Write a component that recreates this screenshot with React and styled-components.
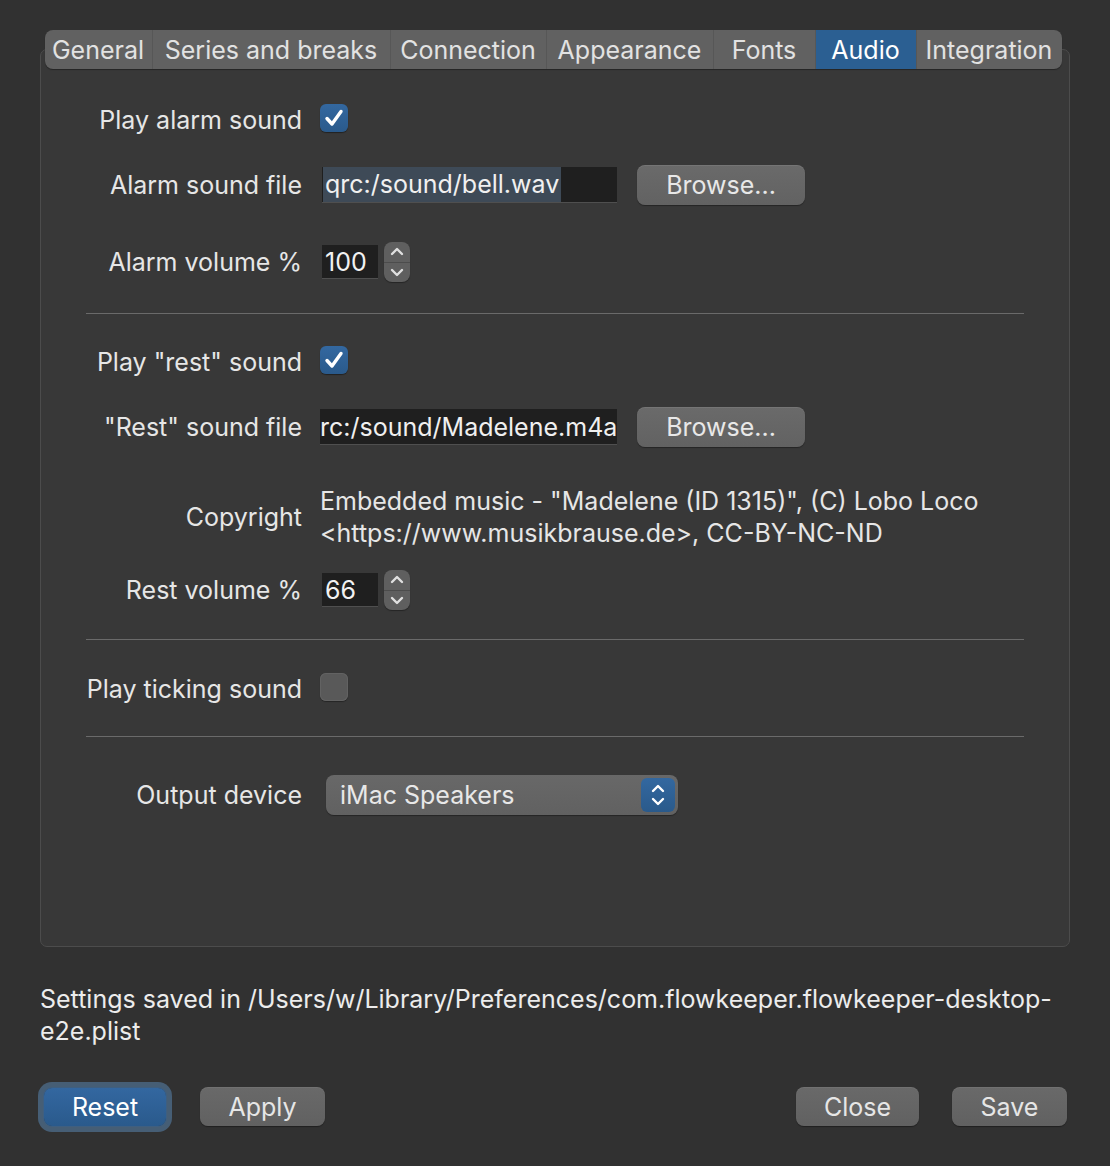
import React from "react";
import styled, { createGlobalStyle } from "styled-components";

const Global = createGlobalStyle`
  html, body { margin: 0; padding: 0; background: #313131; }
  body { font-family: Inter, "Noto Sans", "Liberation Sans", sans-serif; color: #e3e3e3; }
  * { box-sizing: border-box; }
`;

const Page = styled.div`
  width: 1110px;
  height: 1166px;
  padding: 30px 40px 0 40px;
  background: #313131;
  display: flex;
  flex-direction: column;
  font-size: 25px;
`;

const TabWidget = styled.div`
  display: flex;
  flex-direction: column;
`;

const TabBar = styled.div`
  align-self: center;
  position: relative;
  z-index: 1;
  display: flex;
  height: 39px;
  margin-bottom: -20px;
  margin-left: -4px;
  border-radius: 8px;
  background: #616161;
  overflow: hidden;
  box-shadow: 0 1px 1px rgba(0, 0, 0, 0.35);
`;

const Tab = styled.div`
  display: flex;
  align-items: center;
  justify-content: center;
  width: ${(p) => p.$w}px;
  height: 100%;
  font-size: 25px;
  color: ${(p) => (p.$active ? "#ffffff" : "#e2e2e2")};
  background: ${(p) => (p.$active ? "#2b5f92" : "transparent")};
  border-left: ${(p) => (p.$first ? "none" : "1px solid #575757")};
  white-space: nowrap;
`;

const Pane = styled.div`
  height: 898px;
  border: 1px solid #4c4c4c;
  border-radius: 7px;
  background: #383838;
  padding: 50px 45px 0 45px;
  display: flex;
  flex-direction: column;
`;

const Row = styled.div`
  display: grid;
  grid-template-columns: 216px 1fr;
  column-gap: 18px;
  align-items: center;
  min-height: 40px;
  margin-top: ${(p) => p.$mt || 0}px;
`;

const Label = styled.div`
  text-align: right;
  white-space: nowrap;
  color: #e6e6e6;
`;

const Field = styled.div`
  display: flex;
  align-items: center;
  gap: 20px;
  margin-left: ${(p) => p.$ml || 0}px;
`;

const Separator = styled.div`
  height: 1px;
  background: #6a6a6a;
  margin-top: ${(p) => p.$mt || 0}px;
`;

const CheckBox = styled.div`
  width: 28px;
  height: 28px;
  border-radius: 6px;
  display: flex;
  align-items: center;
  justify-content: center;
  margin-top: -4px;
  background: ${(p) => (p.$checked ? "linear-gradient(#3368a0, #2a5a8b)" : "#595959")};
  box-shadow: ${(p) =>
    p.$checked ? "0 1px 1px rgba(0,0,0,0.4)" : "inset 0 0 0 1px #626262, 0 1px 1px rgba(0,0,0,0.35)"};
`;

const TextInput = styled.div`
  width: ${(p) => p.$w}px;
  height: 36px;
  background: #1f1f1f;
  border-bottom: 1px solid #4f4f4f;
  display: flex;
  align-items: center;
  overflow: hidden;
  white-space: nowrap;
  font-size: 25px;
  color: #f0f0f0;
  padding-left: ${(p) => p.$pl || 0}px;
`;

const Selection = styled.span`
  background: #3e4a57;
  padding: 2px 2px 3px 2px;
  margin-left: 1px;
`;

const PushButton = styled.div`
  height: 40px;
  width: ${(p) => (p.$w ? `${p.$w}px` : "auto")};
  padding: 0 28px;
  border-radius: 8px;
  display: flex;
  align-items: center;
  justify-content: center;
  font-size: 25px;
  color: #e8e8e8;
  background: linear-gradient(#6a6a6a, #626262);
  box-shadow: 0 1px 1px rgba(0, 0, 0, 0.35), inset 0 1px 0 rgba(255, 255, 255, 0.08);
  white-space: nowrap;
`;

const SpinBox = styled.div`
  display: flex;
  align-items: center;
  gap: 6px;
`;

const SpinInput = styled.div`
  width: 56px;
  height: 34px;
  background: #1f1f1f;
  border-bottom: 1px solid #4f4f4f;
  display: flex;
  align-items: center;
  padding-left: 3px;
  font-size: 25px;
  color: #f2f2f2;
`;

const Stepper = styled.div`
  width: 26px;
  height: 40px;
  border-radius: 8px;
  background: #5f5f5f;
  display: flex;
  flex-direction: column;
  box-shadow: 0 1px 1px rgba(0, 0, 0, 0.35);
`;

const StepHalf = styled.div`
  flex: 1;
  display: flex;
  align-items: center;
  justify-content: center;
  border-top: ${(p) => (p.$bottom ? "1px solid #4c4c4c" : "none")};
`;

const Copyright = styled.div`
  line-height: 32px;
  color: #e6e6e6;
`;

const Select = styled.div`
  width: 352px;
  height: 40px;
  border-radius: 8px;
  background: linear-gradient(#686868, #616161);
  display: flex;
  align-items: center;
  justify-content: space-between;
  padding: 0 3px 0 14px;
  margin-left: 6px;
  color: #e8e8e8;
  box-shadow: 0 1px 1px rgba(0, 0, 0, 0.35);
`;

const SelectArrow = styled.div`
  width: 34px;
  height: 34px;
  border-radius: 6px;
  background: linear-gradient(#3368a0, #2a5a8b);
  display: flex;
  align-items: center;
  justify-content: center;
`;

const Footer = styled.div`
  margin-top: 36px;
  line-height: 32px;
  color: #ececec;
`;

const ButtonRow = styled.div`
  margin-top: 40px;
  display: flex;
  justify-content: space-between;
  align-items: center;
  padding: 0 3px 0 4px;
`;

const ButtonGroup = styled.div`
  display: flex;
  align-items: center;
  gap: ${(p) => p.$gap}px;
`;

const DialogButton = styled.div`
  height: ${(p) => (p.$default ? 38 : 39)}px;
  width: ${(p) => p.$w}px;
  border-radius: 8px;
  display: flex;
  align-items: center;
  justify-content: center;
  font-size: 25px;
  color: ${(p) => (p.$default ? "#ffffff" : "#e6e6e6")};
  background: ${(p) =>
    p.$default ? "linear-gradient(#3367a0, #2a5a8c)" : "linear-gradient(#696969, #616161)"};
  box-shadow: ${(p) =>
    p.$default
      ? "0 0 0 1px #3f5f80, 0 0 0 6px rgba(77, 110, 140, 0.75)"
      : "0 1px 1px rgba(0,0,0,0.35), inset 0 1px 0 rgba(255,255,255,0.06)"};
`;

const Check = () => (
  <svg width="22" height="22" viewBox="0 0 22 22">
    <path d="M4 11.5 L9 17 L18 4.5" fill="none" stroke="#ffffff" strokeWidth="3.4" strokeLinecap="round" strokeLinejoin="round" />
  </svg>
);

const ChevronUp = ({ color = "#e0e0e0" }) => (
  <svg width="14" height="9" viewBox="0 0 14 9">
    <path d="M2 7 L7 2 L12 7" fill="none" stroke={color} strokeWidth="2.4" strokeLinecap="round" strokeLinejoin="round" />
  </svg>
);

const ChevronDown = ({ color = "#e0e0e0" }) => (
  <svg width="14" height="9" viewBox="0 0 14 9">
    <path d="M2 2 L7 7 L12 2" fill="none" stroke={color} strokeWidth="2.4" strokeLinecap="round" strokeLinejoin="round" />
  </svg>
);

const UpDown = () => (
  <svg width="16" height="26" viewBox="0 0 16 26">
    <path d="M3 9 L8 4 L13 9" fill="none" stroke="#ffffff" strokeWidth="2.4" strokeLinecap="round" strokeLinejoin="round" />
    <path d="M3 17 L8 22 L13 17" fill="none" stroke="#ffffff" strokeWidth="2.4" strokeLinecap="round" strokeLinejoin="round" />
  </svg>
);

const Spin = ({ value }) => (
  <SpinBox>
    <SpinInput>{value}</SpinInput>
    <Stepper>
      <StepHalf>
        <ChevronUp />
      </StepHalf>
      <StepHalf $bottom>
        <ChevronDown />
      </StepHalf>
    </Stepper>
  </SpinBox>
);

const tabs = [
  { name: "General", w: 107 },
  { name: "Series and breaks", w: 238 },
  { name: "Connection", w: 156 },
  { name: "Appearance", w: 167 },
  { name: "Fonts", w: 102 },
  { name: "Audio", w: 101 },
  { name: "Integration", w: 146 },
];

export default function App() {
  return (
    <>
      <Global />
      <Page>
        <TabWidget>
          <TabBar>
            {tabs.map((t, i) => (
              <Tab key={t.name} $w={t.w} $first={i === 0} $active={t.name === "Audio"}>
                {t.name}
              </Tab>
            ))}
          </TabBar>
          <Pane>
            <Row>
              <Label>Play alarm sound</Label>
              <Field>
                <CheckBox $checked>
                  <Check />
                </CheckBox>
              </Field>
            </Row>
            <Row $mt={25}>
              <Label>Alarm sound file</Label>
              <Field $ml={2}>
                <TextInput $w={295}>
                  <Selection>qrc:/sound/bell.wav</Selection>
                </TextInput>
                <PushButton $w={168}>Browse...</PushButton>
              </Field>
            </Row>
            <Row $mt={37}>
              <Label>Alarm volume %</Label>
              <Field $ml={2}>
                <Spin value="100" />
              </Field>
            </Row>
            <Separator $mt={31} />
            <Row $mt={28}>
              <Label>Play "rest" sound</Label>
              <Field>
                <CheckBox $checked>
                  <Check />
                </CheckBox>
              </Field>
            </Row>
            <Row $mt={25}>
              <Label>"Rest" sound file</Label>
              <Field>
                <TextInput $w={297}>rc:/sound/Madelene.m4a</TextInput>
                <PushButton $w={168}>Browse...</PushButton>
              </Field>
            </Row>
            <Row $mt={38}>
              <Label>Copyright</Label>
              <Copyright>
                Embedded music - "Madelene (ID 1315)", (C) Lobo Loco
                <br />
                &lt;https://www.musikbrause.de&gt;, CC-BY-NC-ND
              </Copyright>
            </Row>
            <Row $mt={21}>
              <Label>Rest volume %</Label>
              <Field $ml={2}>
                <Spin value="66" />
              </Field>
            </Row>
            <Separator $mt={29} />
            <Row $mt={29}>
              <Label>Play ticking sound</Label>
              <Field>
                <CheckBox />
              </Field>
            </Row>
            <Separator $mt={27} />
            <Row $mt={38}>
              <Label>Output device</Label>
              <Field>
                <Select>
                  iMac Speakers
                  <SelectArrow>
                    <UpDown />
                  </SelectArrow>
                </Select>
              </Field>
            </Row>
          </Pane>
        </TabWidget>
        <Footer>
          Settings saved in /Users/w/Library/Preferences/com.flowkeeper.flowkeeper-desktop-
          <br />
          e2e.plist
        </Footer>
        <ButtonRow>
          <ButtonGroup $gap={34}>
            <DialogButton $default $w={122}>
              Reset
            </DialogButton>
            <DialogButton $w={125}>Apply</DialogButton>
          </ButtonGroup>
          <ButtonGroup $gap={33}>
            <DialogButton $w={123}>Close</DialogButton>
            <DialogButton $w={115}>Save</DialogButton>
          </ButtonGroup>
        </ButtonRow>
      </Page>
    </>
  );
}
